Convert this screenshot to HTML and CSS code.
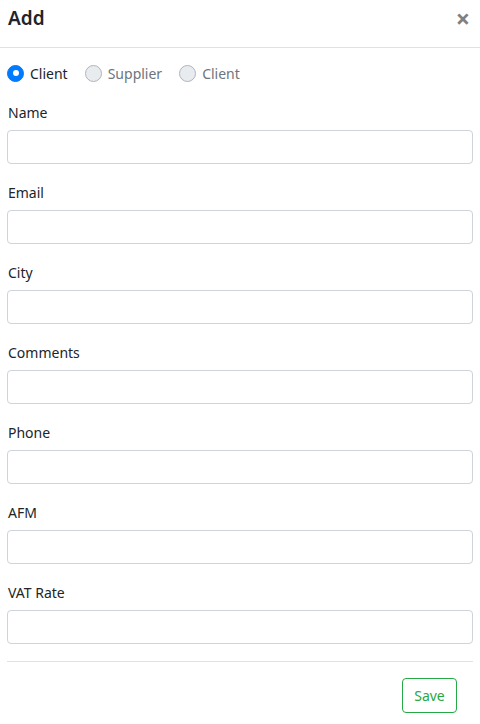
FILE: index.html
```html
<!DOCTYPE html>
<html>
<head>
<meta charset="utf-8">
<link rel="stylesheet" href="styles.css">
</head>
<body>
<div class="modal">
  <div class="header">
    <h5 class="title">Add</h5>
    <span class="close">×</span>
  </div>
  <div class="body">
    <div class="radios">
      <label class="radio checked"><span class="dot"></span><span class="rl">Client</span></label>
      <label class="radio"><span class="dot"></span><span class="rl muted">Supplier</span></label>
      <label class="radio"><span class="dot"></span><span class="rl muted">Client</span></label>
    </div>
    <div class="group"><label class="lbl">Name</label><div class="input"></div></div>
    <div class="group"><label class="lbl">Email</label><div class="input"></div></div>
    <div class="group"><label class="lbl">City</label><div class="input"></div></div>
    <div class="group"><label class="lbl">Comments</label><div class="input"></div></div>
    <div class="group"><label class="lbl">Phone</label><div class="input"></div></div>
    <div class="group"><label class="lbl">AFM</label><div class="input"></div></div>
    <div class="group last"><label class="lbl">VAT Rate</label><div class="input"></div></div>
  </div>
  <div class="footer">
    <button class="save">Save</button>
  </div>
</div>
</body>
</html>
```

FILE: styles.css
```css
* { box-sizing: border-box; }
html, body { margin: 0; padding: 0; background: #fff; }
body {
  font-family: "Noto Sans", "Open Sans", sans-serif;
  font-size: 14px;
  line-height: 21px;
  color: #212529;
}
.modal { width: 480px; }
.header {
  height: 48px;
  border-bottom: 1px solid #dee2e6;
  display: flex;
  justify-content: space-between;
  align-items: flex-start;
  padding: 3px 10px 0 8px;
}
.title {
  margin: 0;
  font-size: 19px;
  font-weight: 600;
  line-height: 30px;
  color: #212529;
}
.close {
  font-size: 25px;
  font-weight: 700;
  color: #808080;
  line-height: 30px;
}
.body { padding: 16px 7px 0 7px; }
.radios {
  display: flex;
  align-items: center;
  height: 18px;
  margin-bottom: 20px;
}
.radio {
  display: flex;
  align-items: center;
  margin-right: 17px;
}
.dot {
  width: 17px;
  height: 17px;
  border-radius: 50%;
  border: 1px solid #adb5bd;
  background: #e9ecef;
  margin-right: 6px;
  position: relative;
}
.checked .dot {
  background: #007bff;
  border-color: #007bff;
}
.checked .dot::after {
  content: "";
  position: absolute;
  left: 4.5px; top: 4.5px;
  width: 6px; height: 6px;
  border-radius: 50%;
  background: #fff;
}
.rl { color: #212529; }
.muted { color: #6c757d; }
.group { margin-bottom: 18px; }
.group.last { margin-bottom: 17px; }
.lbl {
  display: block;
  padding-left: 1px;
  margin-bottom: 7px;
  line-height: 21px;
}
.input {
  height: 34px;
  width: 466px;
  border: 1px solid #ced4da;
  border-radius: 4px;
  background: #fff;
}
.footer {
  margin: 0 7px;
  border-top: 1px solid #dee2e6;
  display: flex;
  justify-content: flex-end;
  padding: 16px 16px 0 0;
}
.save {
  width: 55px;
  height: 35px;
  border: 1px solid #28a745;
  border-radius: 4px;
  background: #fff;
  color: #28a745;
  font-family: inherit;
  font-size: 14px;
  padding: 0;
}
```
